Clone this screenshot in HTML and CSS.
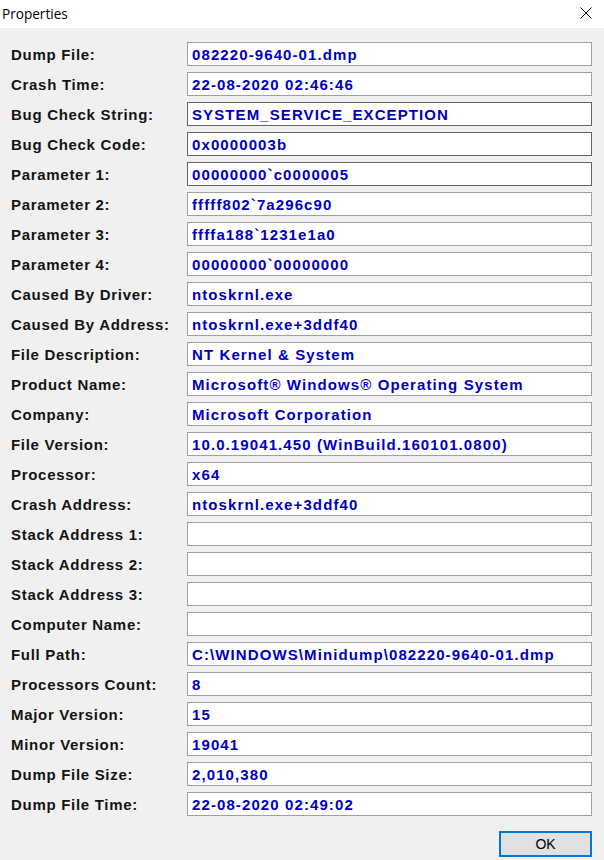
FILE: index.html
```html
<!DOCTYPE html>
<html>
<head>
<meta charset="utf-8">
<link rel="stylesheet" href="styles.css">
</head>
<body>
<div class="window">
  <div class="titlebar">
    <span class="title">Properties</span>
    <svg class="close" width="12" height="12" viewBox="0 0 12 12"><path d="M0.5 0.5 L11.5 11.5 M11.5 0.5 L0.5 11.5" stroke="#000" stroke-width="1" fill="none"/></svg>
  </div>
  <div class="content">
    <div class="grid">
      <div class="label">Dump File:</div><div class="box">082220-9640-01.dmp</div>
      <div class="label">Crash Time:</div><div class="box">22-08-2020 02:46:46</div>
      <div class="label">Bug Check String:</div><div class="box dark">SYSTEM_SERVICE_EXCEPTION</div>
      <div class="label">Bug Check Code:</div><div class="box dark">0x0000003b</div>
      <div class="label">Parameter 1:</div><div class="box dark">00000000`c0000005</div>
      <div class="label">Parameter 2:</div><div class="box">fffff802`7a296c90</div>
      <div class="label">Parameter 3:</div><div class="box">ffffa188`1231e1a0</div>
      <div class="label">Parameter 4:</div><div class="box">00000000`00000000</div>
      <div class="label">Caused By Driver:</div><div class="box">ntoskrnl.exe</div>
      <div class="label">Caused By Address:</div><div class="box">ntoskrnl.exe+3ddf40</div>
      <div class="label">File Description:</div><div class="box">NT Kernel &amp; System</div>
      <div class="label">Product Name:</div><div class="box">Microsoft® Windows® Operating System</div>
      <div class="label">Company:</div><div class="box">Microsoft Corporation</div>
      <div class="label">File Version:</div><div class="box">10.0.19041.450 (WinBuild.160101.0800)</div>
      <div class="label">Processor:</div><div class="box">x64</div>
      <div class="label">Crash Address:</div><div class="box">ntoskrnl.exe+3ddf40</div>
      <div class="label">Stack Address 1:</div><div class="box"></div>
      <div class="label">Stack Address 2:</div><div class="box"></div>
      <div class="label">Stack Address 3:</div><div class="box"></div>
      <div class="label">Computer Name:</div><div class="box"></div>
      <div class="label">Full Path:</div><div class="box">C:\WINDOWS\Minidump\082220-9640-01.dmp</div>
      <div class="label">Processors Count:</div><div class="box">8</div>
      <div class="label">Major Version:</div><div class="box">15</div>
      <div class="label">Minor Version:</div><div class="box">19041</div>
      <div class="label">Dump File Size:</div><div class="box">2,010,380</div>
      <div class="label">Dump File Time:</div><div class="box">22-08-2020 02:49:02</div>
    </div>
    <div class="buttons">
      <button class="ok">OK</button>
    </div>
  </div>
</div>
</body>
</html>
```
FILE: styles.css
```css
html, body {
  margin: 0;
  padding: 0;
  background: #f0f0f0;
}
.window {
  width: 604px;
  height: 860px;
  background: #f0f0f0;
  overflow: hidden;
}
.titlebar {
  height: 28px;
  background: #ffffff;
  display: flex;
  align-items: center;
  justify-content: space-between;
  padding: 0 12px 2px 2px;
  box-sizing: border-box;
}
.title {
  font-family: "Open Sans", "Liberation Sans", sans-serif;
  font-size: 13.6px;
  color: #000;
}
.close {
  display: block;
}
.content {
  padding: 14px 12px 0 11px;
}
.grid {
  display: grid;
  grid-template-columns: 176px 405px;
  grid-auto-rows: 24px;
  row-gap: 6px;
}
.label {
  font-family: "Liberation Sans", Arial, sans-serif;
  font-weight: bold;
  font-size: 15px;
  letter-spacing: 0.7px;
  color: #141414;
  display: flex;
  align-items: center;
  padding-top: 1px;
  white-space: nowrap;
}
.box {
  box-sizing: border-box;
  height: 24px;
  background: #ffffff;
  border: 1px solid #a0a0a0;
  font-family: "Liberation Sans", Arial, sans-serif;
  font-weight: bold;
  font-size: 15px;
  letter-spacing: 1.1px;
  color: #0000c4;
  padding: 0 0 0 4px;
  display: flex;
  align-items: center;
  white-space: nowrap;
  overflow: hidden;
}
.box.dark {
  border-color: #646464;
}
.buttons {
  display: flex;
  justify-content: flex-end;
  padding-top: 15px;
}
.ok {
  width: 93px;
  height: 26px;
  box-sizing: border-box;
  background: #e1e1e1;
  border: 2px solid #0078d7;
  font-family: "Liberation Sans", Arial, sans-serif;
  font-size: 14px;
  color: #000;
  padding: 0;
  margin: 0;
}
```
